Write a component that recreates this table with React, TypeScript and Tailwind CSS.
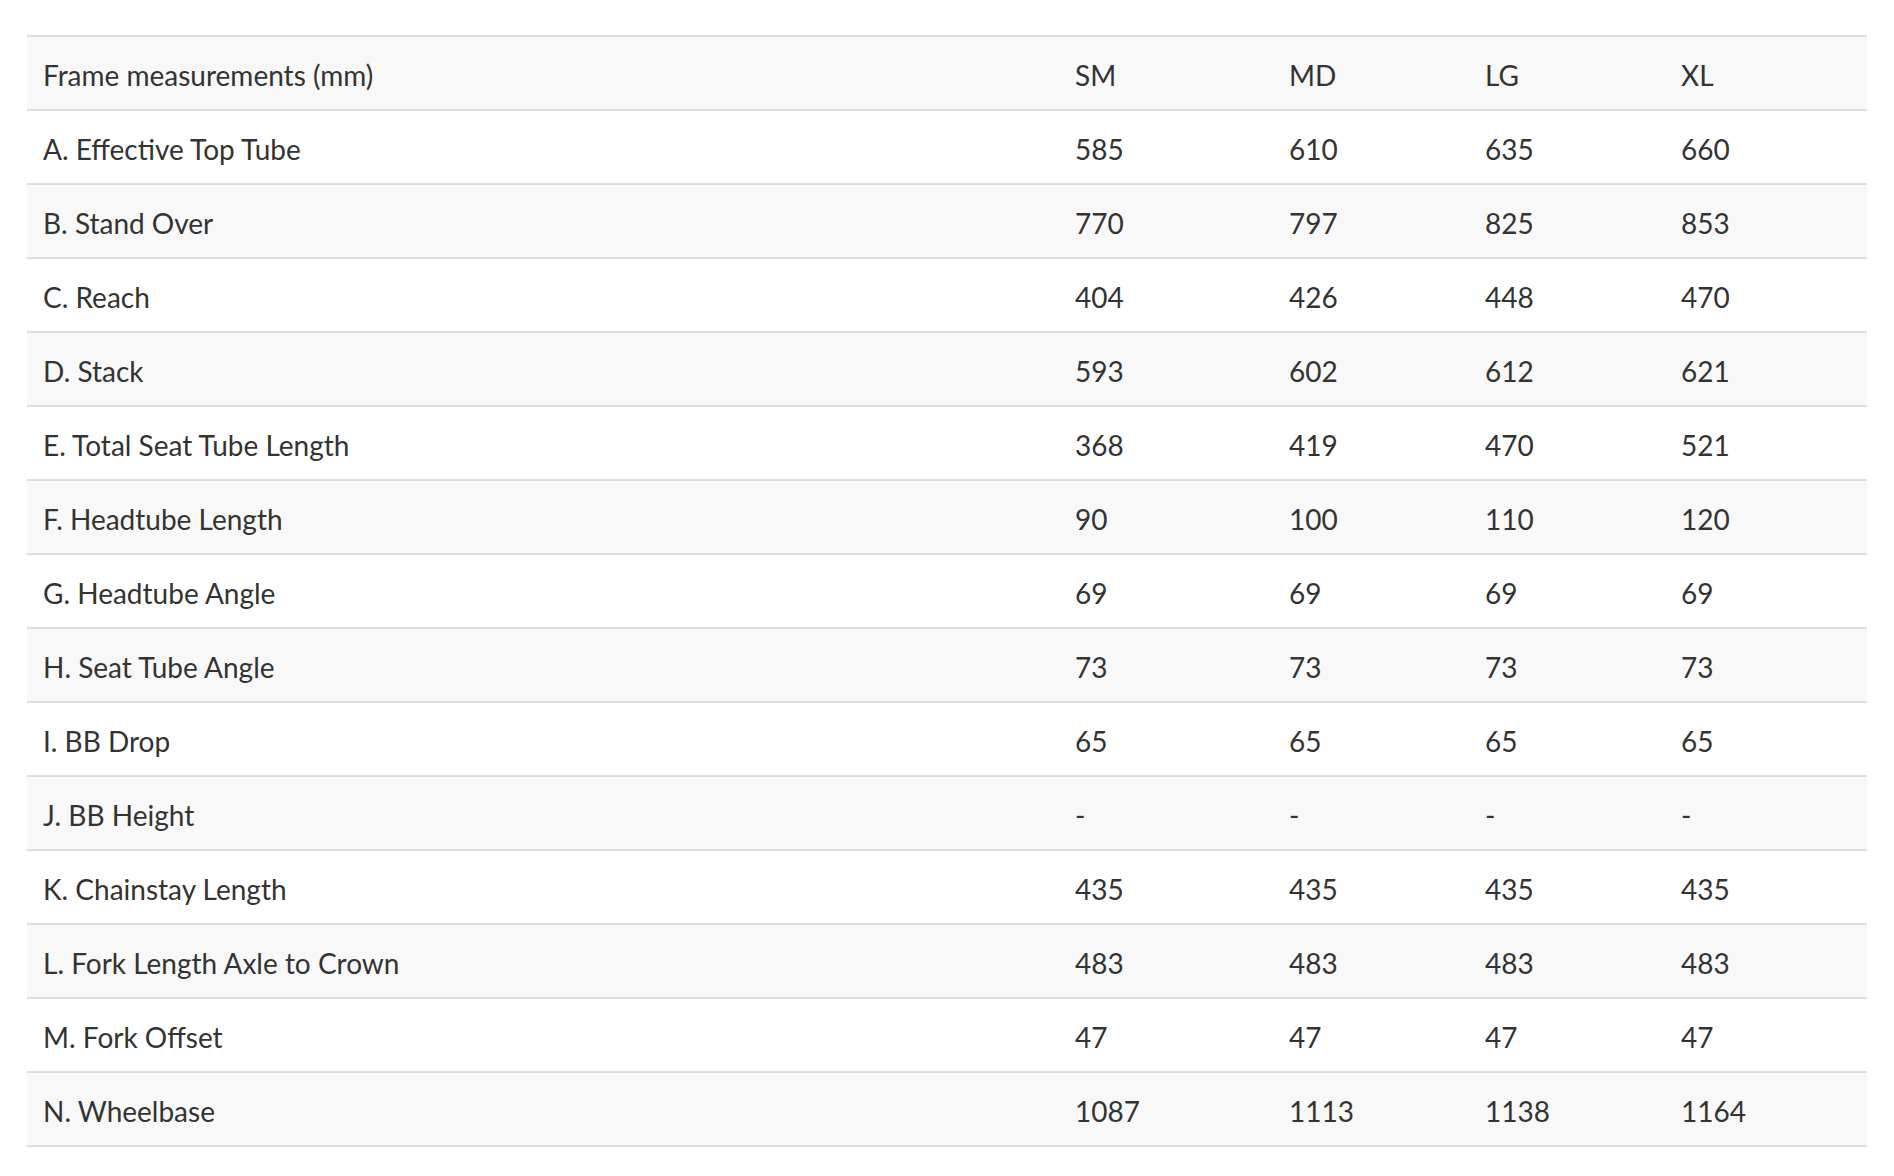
const SIZES = ["SM", "MD", "LG", "XL"]

const ROWS: { label: string; values: string[] }[] = [
  { label: "A. Effective Top Tube", values: ["585", "610", "635", "660"] },
  { label: "B. Stand Over", values: ["770", "797", "825", "853"] },
  { label: "C. Reach", values: ["404", "426", "448", "470"] },
  { label: "D. Stack", values: ["593", "602", "612", "621"] },
  { label: "E. Total Seat Tube Length", values: ["368", "419", "470", "521"] },
  { label: "F. Headtube Length", values: ["90", "100", "110", "120"] },
  { label: "G. Headtube Angle", values: ["69", "69", "69", "69"] },
  { label: "H. Seat Tube Angle", values: ["73", "73", "73", "73"] },
  { label: "I. BB Drop", values: ["65", "65", "65", "65"] },
  { label: "J. BB Height", values: ["-", "-", "-", "-"] },
  { label: "K. Chainstay Length", values: ["435", "435", "435", "435"] },
  { label: "L. Fork Length Axle to Crown", values: ["483", "483", "483", "483"] },
  { label: "M. Fork Offset", values: ["47", "47", "47", "47"] },
  { label: "N. Wheelbase", values: ["1087", "1113", "1138", "1164"] },
]

const COLS = "grid grid-cols-[1033px_214px_196px_196px_1fr]"

export default function App() {
  return (
    <div className="min-h-[1176px] bg-white pt-[35px] pl-[27px] pr-[27px] font-['Lato','Open_Sans',sans-serif] text-[#333333]">
      <div className="w-[1840px] border-t-2 border-[#dddddd]">
        <div className={`${COLS} h-[74px] items-center border-b-2 border-[#dddddd] bg-[#f8f8f8] pt-[3px] text-[28px] leading-none`}>
          <div className="pl-[16px]">Frame measurements (mm)</div>
          {SIZES.map((s) => (
            <div key={s} className="pl-[15px]">{s}</div>
          ))}
        </div>
        {ROWS.map((row, i) => (
          <div
            key={row.label}
            className={`${COLS} h-[74px] items-center border-b-2 border-[#dddddd] pt-[3px] text-[28px] leading-none ${i % 2 === 1 ? "bg-[#f8f8f8]" : "bg-white"}`}
          >
            <div className="pl-[16px]">{row.label}</div>
            {row.values.map((v, j) => (
              <div key={j} className="pl-[15px]">{v}</div>
            ))}
          </div>
        ))}
      </div>
    </div>
  )
}
